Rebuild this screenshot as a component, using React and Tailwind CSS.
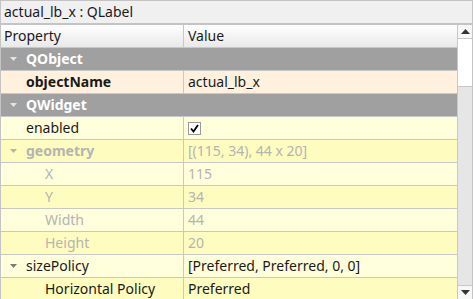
import React from "react";

// Rows of the property editor, top to bottom.
const rows = [
  { kind: "group", name: "QObject" },
  { kind: "prop", name: "objectName", value: "actual_lb_x", bold: true, bg: "bg-[#fff1de]", indent: 0 },
  { kind: "group", name: "QWidget" },
  { kind: "prop", name: "enabled", check: true, bg: "bg-[#ffffdc]", indent: 0 },
  { kind: "prop", name: "geometry", value: "[(115, 34), 44 x 20]", bold: true, dim: true, arrow: true, bg: "bg-[#fffcbf]", indent: 0 },
  { kind: "prop", name: "X", value: "115", dim: true, bg: "bg-[#ffffdc]", indent: 1 },
  { kind: "prop", name: "Y", value: "34", dim: true, bg: "bg-[#fffcbf]", indent: 1 },
  { kind: "prop", name: "Width", value: "44", dim: true, bg: "bg-[#ffffdc]", indent: 1 },
  { kind: "prop", name: "Height", value: "20", dim: true, bg: "bg-[#fffcbf]", indent: 1 },
  { kind: "prop", name: "sizePolicy", value: "[Preferred, Preferred, 0, 0]", arrow: true, bg: "bg-[#ffffdc]", indent: 0 },
  { kind: "prop", name: "Horizontal Policy", value: "Preferred", bg: "bg-[#fffcbf]", indent: 1 },
];

// Small down-pointing triangle used for expandable rows.
const Arrow = ({ color }) => (
  <svg width="7" height="4" viewBox="0 0 7 4" className="shrink-0">
    <path d="M0 0 L7 0 L3.5 4 Z" fill={color} />
  </svg>
);

const Row = ({ row }) => {
  if (row.kind === "group") {
    return (
      <div className="flex h-[23px] shrink-0 items-center bg-[#a0a0a0] border-b border-[#c8c8c8]">
        <div className="w-[25px] flex justify-center">
          <Arrow color="#e4e4e4" />
        </div>
        <span className="text-white font-bold">{row.name}</span>
      </div>
    );
  }
  const textColor = row.dim ? "text-[#b4b4b4]" : "text-[#1a1a1a]";
  return (
    <div className={`flex h-[23px] shrink-0 border-b border-[#c8c8c8] ${row.bg}`}>
      <div className="flex w-[183px] shrink-0 items-center border-r border-[#c8c8c8]">
        <div className="w-[25px] flex justify-center">
          {row.arrow && <Arrow color={row.dim ? "#b4b4b4" : "#7a7a7a"} />}
        </div>
        <span className={`${textColor} ${row.bold ? "font-bold" : ""} ${row.indent ? "pl-[19px]" : ""} whitespace-nowrap`}>
          {row.name}
        </span>
      </div>
      <div className={`flex items-center pl-[4px] ${textColor} whitespace-nowrap`}>
        {row.check ? (
          <div className="w-[13px] h-[13px] bg-white border border-[#9a9a9a] flex items-center justify-center">
            <svg width="9" height="9" viewBox="0 0 9 9">
              <path d="M1 4.5 L3.5 7.5 L8 1" stroke="#000" strokeWidth="1.8" fill="none" />
            </svg>
          </div>
        ) : (
          row.value
        )}
      </div>
    </div>
  );
};

export default function App() {
  return (
    <div className="w-[473px] h-[299px] bg-[#efefef] overflow-hidden text-[14px] leading-none" style={{ fontFamily: '"Noto Sans", "Open Sans", sans-serif' }}>
      {/* Object title bar */}
      <div className="h-[24px] border border-[#c4c4c4] bg-[#f0f0f0] flex items-center pl-[3px] text-[#1a1a1a]">
        actual_lb_x : QLabel
      </div>
      {/* Property tree with scrollbar */}
      <div className="flex h-[275px] border border-[#c4c4c4] border-b-0 bg-white">
        <div className="flex-1 flex flex-col overflow-hidden">
          <div className="flex h-[23px] shrink-0 border-b border-[#c8c8c8] bg-gradient-to-b from-white to-[#e9e9e9] text-[#1a1a1a]">
            <div className="w-[183px] flex items-center pl-[3px] border-r border-[#c8c8c8]">Property</div>
            <div className="flex items-center pl-[4px]">Value</div>
          </div>
          {rows.map((row, i) => (
            <Row key={i} row={row} />
          ))}
        </div>
        <div className="w-[15px] flex flex-col bg-[#e6e6e6] border-l border-[#c8c8c8]">
          <div className="h-[14px] shrink-0 bg-[#f7f7f7] border-b border-[#c8c8c8] flex items-center justify-center">
            <svg width="9" height="5" viewBox="0 0 9 5"><path d="M0 5 L9 5 L4.5 0 Z" fill="#333" /></svg>
          </div>
          <div className="h-[48px] shrink-0 bg-white border-b border-[#c8c8c8]" />
          <div className="flex-1" />
          <div className="h-[14px] shrink-0 bg-[#f7f7f7] border-t border-[#c8c8c8] flex items-center justify-center">
            <svg width="9" height="5" viewBox="0 0 9 5"><path d="M0 0 L9 0 L4.5 5 Z" fill="#333" /></svg>
          </div>
        </div>
      </div>
    </div>
  );
}
